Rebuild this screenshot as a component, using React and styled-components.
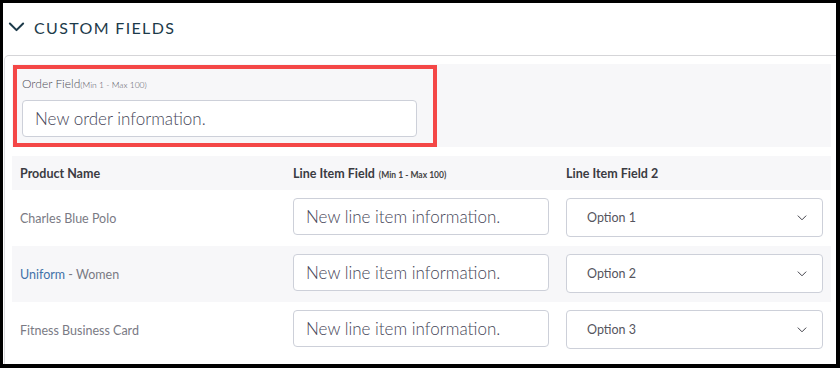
import React from 'react';
import styled, { createGlobalStyle } from 'styled-components';

const Global = createGlobalStyle`
    html, body {
        margin: 0;
        padding: 0;
        background: #ffffff;
    }
    * {
        box-sizing: border-box;
    }
`;

const Frame = styled.div`
    width: 840px;
    height: 368px;
    border-style: solid;
    border-color: #000;
    border-width: 3px 4px 4px 3px;
    background: #fff;
    font-family: Lato, "Open Sans", sans-serif;
    overflow: hidden;
`;

const Header = styled.div`
    height: 52px;
    display: flex;
    align-items: center;
    gap: 9px;
    padding: 0 0 4px 5px;
    color: #1c3a4a;
`;

const Title = styled.h2`
    margin: 0;
    font-size: 16px;
    font-weight: 400;
    letter-spacing: 1.35px;
    color: #1c3a4a;
`;

const Card = styled.div`
    margin-left: 1px;
    border-top: 1px solid #d5d5d8;
    border-left: 1px solid #dcdce0;
    border-top-left-radius: 5px;
    padding: 8px 5px 6px 7px;
`;

const OrderPanel = styled.div`
    background: #f7f7f9;
    padding: 1px 0 0 1px;
    height: 83px;
`;

const Highlight = styled.div`
    width: 424px;
    height: 82px;
    border: 4px solid #f44747;
    padding: 7px 14px 0 5px;
`;

const Label = styled.div`
    font-size: 12px;
    font-weight: 300;
    color: #4e4e58;
    height: 24px;
    line-height: 16px;
`;

const Small = styled.span`
    font-size: 8.5px;
    font-weight: ${props => props.bold ? 700 : 300};
    color: ${props => props.bold ? '#444' : '#55555f'};
    margin-left: ${props => props.gap || 0}px;
`;

const TextInput = styled.input`
    display: block;
    width: ${props => props.w}px;
    height: 37px;
    border: 1px solid #cdd0d9;
    border-radius: 4px;
    background: #fff;
    padding: 0 12px;
    font-family: Lato, "Open Sans", sans-serif;
    font-size: 17px;
    font-weight: 300;
    color: #4a4a5a;
    outline: none;
    &::placeholder {
        color: #464658;
        opacity: 1;
    }
`;

const Table = styled.div`
    margin-top: 9px;
`;

const Row = styled.div`
    display: grid;
    grid-template-columns: 273px 273px 273px;
    align-items: ${props => props.head ? 'center' : 'start'};
    height: ${props => props.head ? 34 : 56}px;
    padding-top: ${props => props.head ? 0 : 8}px;
    background: ${props => props.shade ? '#f7f7f9' : '#fff'};
`;

const Cell = styled.div`
    padding: 0 8px;
    display: flex;
    align-items: center;
    min-height: ${props => props.tall ? 37 : 0}px;
`;

const HeadText = styled.span`
    font-size: 12.5px;
    font-weight: 700;
    color: #3b3b42;
`;

const Product = styled.span`
    font-size: 12.5px;
    font-weight: 400;
    color: #7a7a84;
    padding-top: 3px;
`;

const Link = styled.span`
    color: #4272a8;
`;

const SelectBox = styled.div`
    width: 257px;
    height: 39px;
    border: 1px solid #cdd0d9;
    border-radius: 4px;
    background: #fff;
    display: flex;
    align-items: center;
    justify-content: space-between;
    padding: 0 15px 0 20px;
    font-size: 12.5px;
    color: #55555e;
`;

const Chevron = ({ size = 16, stroke = 2, color = '#1c3a4a' }) => (
    <svg width={size} height={size * 0.6} viewBox="0 0 16 10" fill="none">
        <path d="M1.5 1.5 L8 8 L14.5 1.5" stroke={color} strokeWidth={stroke} strokeLinecap="round" strokeLinejoin="round" />
    </svg>
);

const products = [
    { name: 'Charles Blue Polo', option: 'Option 1' },
    { name: 'Uniform - Women', option: 'Option 2', link: true },
    { name: 'Fitness Business Card', option: 'Option 3' },
];

const App = () => {
    return (
        <Frame>
            <Global />
            <Header>
                <Chevron size={17} stroke={2} />
                <Title>CUSTOM FIELDS</Title>
            </Header>
            <Card>
                <OrderPanel>
                    <Highlight>
                        <Label>Order Field<Small>(Min 1 - Max 100)</Small></Label>
                        <TextInput w={395} placeholder="New order information." />
                    </Highlight>
                </OrderPanel>
                <Table>
                    <Row head shade>
                        <Cell><HeadText>Product Name</HeadText></Cell>
                        <Cell><HeadText>Line Item Field<Small bold gap={4}>(Min 1 - Max 100)</Small></HeadText></Cell>
                        <Cell><HeadText>Line Item Field 2</HeadText></Cell>
                    </Row>
                    {products.map((p, i) => (
                        <Row key={p.name} shade={i % 2 === 1}>
                            <Cell tall>
                                {p.link
                                    ? <Product><Link>Uniform</Link> - Women</Product>
                                    : <Product>{p.name}</Product>}
                            </Cell>
                            <Cell><TextInput w={256} placeholder="New line item information." /></Cell>
                            <Cell>
                                <SelectBox>
                                    {p.option}
                                    <Chevron size={10} stroke={1.6} color="#3a3a42" />
                                </SelectBox>
                            </Cell>
                        </Row>
                    ))}
                </Table>
            </Card>
        </Frame>
    );
}

export default App;
